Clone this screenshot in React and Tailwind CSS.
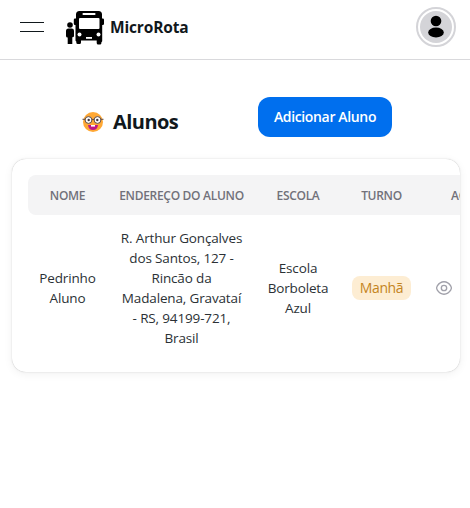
function BusLogo() {
  return (
    <svg viewBox="0 0 40 36" className="h-9 w-10 shrink-0" aria-hidden="true">
      <path d="M15.500 2h19q3.500 0 3.500 3.500v4h.8q1.200 0 1.200 1.300v4q0 1.200-1.200 1.200h-.6v16q0 1-.8 1v1q0 1.500-1.500 1.500h-1.700q-1.500 0-1.500-1.500V31.500H17v2q0 1.500-1.500 1.500h-1.700q-1.500 0-1.500-1.500v-1q-.8-.3-.8-1V16h-.5q-1.200 0-1.200-1.200v-4q0-1.300 1.200-1.300h1v-4q0-3.500 3.500-3.500z" fill="#000" />
      <rect x="18.500" y="4" width="13" height="2" rx=".8" fill="#fff" />
      <rect x="15" y="9" width="20.500" height="11" rx="1" fill="#fff" />
      <circle cx="15.500" cy="25.500" r="2" fill="#fff" />
      <circle cx="34.500" cy="25.500" r="2" fill="#fff" />
      <rect x="22" y="28" width="6" height="1.800" fill="#fff" />
      <circle cx="6" cy="16" r="2.800" fill="#000" />
      <path d="M4.500 19.500h3.200q2.300 0 2.300 2.300V27q0 1.200-1.700 1.200V35H3.700v-6.500Q2 28.500 2 27v-5q0-2.500 2.500-2.500z" fill="#000" />
    </svg>
  );
}

function NerdFace() {
  return (
    <svg viewBox="0 0 22 22" className="size-[22px] shrink-0" aria-hidden="true">
      <circle cx="11" cy="11" r="10" fill="#ffa834" />
      <circle cx="6.500" cy="9" r="3.400" fill="#fff" stroke="#5d4a45" strokeWidth="1" />
      <circle cx="15.500" cy="9" r="3.400" fill="#fff" stroke="#5d4a45" strokeWidth="1" />
      <path d="M.5 8.300h2.500M19 8.300h2.500M9.900 8.700q1.100-1 2.200 0" fill="none" stroke="#5d4a45" strokeWidth="1" />
      <circle cx="6.700" cy="9" r="1.200" fill="#40343c" />
      <circle cx="15.300" cy="9" r="1.200" fill="#40343c" />
      <path d="M6 14h10q-.5 5-5 5t-5-5z" fill="#bd1688" />
      <path d="M9 14h4v1.600H9z" fill="#fff" />
    </svg>
  );
}

function EyeIcon() {
  return (
    <svg viewBox="0 0 20 20" className="size-[18px]" fill="none" stroke="#a1a1aa" strokeWidth="1.500" strokeLinecap="round" strokeLinejoin="round" aria-hidden="true">
      <path d="M12.983 10c0 1.650-1.333 2.983-2.983 2.983S7.017 11.650 7.017 10 8.350 7.017 10 7.017 12.983 8.350 12.983 10z" />
      <path d="M10 16.892c2.942 0 5.683-1.734 7.592-4.734.75-1.175.75-3.150 0-4.325C15.683 4.833 12.942 3.100 10 3.100S4.317 4.833 2.408 7.833c-.75 1.175-.75 3.150 0 4.325C4.317 15.158 7.058 16.892 10 16.892z" />
    </svg>
  );
}

const columns = "grid grid-cols-[79px_149px_84px_83px_85px] items-center text-center";

export default function App() {
  return (
    <div className="h-[508px] w-[470px] overflow-hidden bg-white font-['Open_Sans','Noto_Sans',sans-serif] text-[#11181c]">
      <header className="flex h-[60px] items-center border-b border-[#d9d9dc] pr-3.5 pl-5">
        <button className="-mt-1.5 flex w-6 flex-col gap-2" aria-label="Menu">
          <span className="h-px w-full bg-[#11181c]" />
          <span className="h-px w-full bg-[#11181c]" />
        </button>
        <div className="-mt-1.5 ml-5 flex items-center">
          <BusLogo />
          <span className="ml-1.5 pt-px text-[15.5px] leading-6 font-bold tracking-[-0.15px] whitespace-nowrap">MicroRota</span>
        </div>
        <div className="-mt-1.5 ml-auto flex size-10 items-center justify-center rounded-full border-2 border-[#d4d4d8]">
          <div className="flex size-8 items-center justify-center rounded-full bg-[#d4d4d8]">
            <svg viewBox="0 0 32 32" className="size-8" aria-hidden="true">
              <circle cx="16" cy="10" r="5.300" />
              <ellipse cx="16" cy="21.500" rx="7.800" ry="5" />
            </svg>
          </div>
        </div>
      </header>

      <main className="px-3 pt-[37px]">
        <div className="flex h-10 items-start pr-[66px] pl-[70px]">
          <div className="mt-2.5 flex items-center gap-[9px]">
            <NerdFace />
            <h1 className="pt-px text-xl leading-7 font-bold tracking-[-0.55px]">Alunos</h1>
          </div>
          <button className="ml-auto h-10 w-[134px] rounded-xl bg-[#006fee] text-sm font-semibold tracking-[-0.35px] whitespace-nowrap text-white">
            Adicionar Aluno
          </button>
        </div>

        <section className="mt-[22px] h-[213px] w-[448px] overflow-hidden rounded-[14px] p-4 pr-0 shadow-[0_0_5px_0_rgb(0_0_0/0.02),0_2px_10px_0_rgb(0_0_0/0.06),0_0_1px_0_rgb(0_0_0/0.3)]">
          <div className={`${columns} h-10 w-[480px] rounded-lg bg-[#f4f4f5] pt-0.5 text-xs font-semibold tracking-[-0.3px] text-[#71717a]`}>
            <span>NOME</span>
            <span className="whitespace-nowrap">ENDEREÇO DO ALUNO</span>
            <span>ESCOLA</span>
            <span>TURNO</span>
            <span className="pl-7 text-left">AÇÕES</span>
          </div>
          <div className={`${columns} mt-[5px] h-[136px] w-[480px] text-[13.5px] leading-5 font-normal tracking-[-0.15px] whitespace-nowrap text-[#2b3135]`}>
            <p>Pedrinho<br />Aluno</p>
            <p>
              R. Arthur Gonçalves<br />dos Santos, 127 -<br />Rincão da<br />Madalena, Gravataí<br />- RS, 94199-721,<br />Brasil
            </p>
            <p>Escola<br />Borboleta<br />Azul</p>
            <span className="mx-auto flex h-6 w-[59px] items-center justify-center rounded-lg bg-[#fdedd3] text-sm tracking-[-0.4px] text-[#c4841d]">Manhã</span>
            <span className="pl-3"><EyeIcon /></span>
          </div>
        </section>
      </main>
    </div>
  );
}
